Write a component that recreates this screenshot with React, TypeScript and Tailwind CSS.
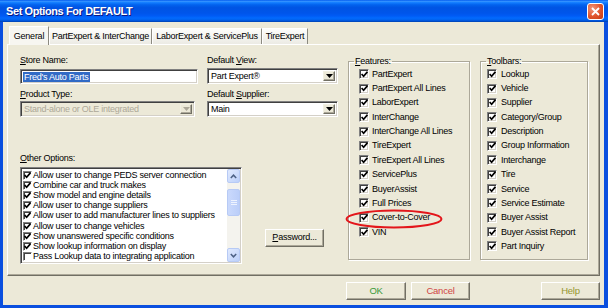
import React from "react";

const CheckMark = () => (
  <svg width="7" height="7" viewBox="0 0 7 7" className="block">
    <path d="M0.6 3 L2.6 5.2 L6.4 0.8" stroke="#000" strokeWidth="1.7" fill="none" />
  </svg>
);

const Box = ({ checked = true, small = false }: { checked?: boolean; small?: boolean }) => (
  <span
    className={
      small
        ? "inline-flex shrink-0 items-center justify-center w-[9px] h-[9px] bg-white border border-t-[#808080] border-l-[#808080] border-r-white border-b-white shadow-[inset_1px_1px_0_#404040]"
        : "inline-flex shrink-0 items-center justify-center w-[10px] h-[10px] bg-white border border-t-[#808080] border-l-[#808080] border-r-white border-b-white shadow-[inset_1px_1px_0_#404040,inset_-1px_-1px_0_#D4D0C8]"
    }
  >
    {checked && <CheckMark />}
  </span>
);

const DownArrow = ({ gray = false }: { gray?: boolean }) => (
  <svg width="7" height="4" viewBox="0 0 7 4" className="block">
    <polygon points="0,0 7,0 3.5,4" fill={gray ? "#ACA899" : "#000"} />
  </svg>
);

const Combo = ({ text, disabled = false, w }: { text: string; disabled?: boolean; w: string }) => (
  <div
    className={
      "flex items-center h-[16px] p-[2px] border border-t-[#808080] border-l-[#808080] border-r-white border-b-white shadow-[inset_1px_1px_0_#404040,inset_-1px_-1px_0_#D4D0C8] " +
      w +
      (disabled ? " bg-[#ECE9D8]" : " bg-white")
    }
  >
    <span className={"flex-1 pl-[1px] leading-[10px] whitespace-nowrap " + (disabled ? "text-[#ACA899]" : "text-black")}>
      {text}
    </span>
    <span className="flex items-center justify-center w-[12px] h-[10px] bg-[#ECE9D8] border border-t-[#F1EFE2] border-l-[#F1EFE2] border-r-[#716F64] border-b-[#716F64] shadow-[inset_-1px_-1px_0_#ACA899]">
      <DownArrow gray={disabled} />
    </span>
  </div>
);

const Label = ({ u, rest, cls = "" }: { u: string; rest: string; cls?: string }) => (
  <div className={"h-[11px] leading-[11px] whitespace-nowrap " + cls}>
    <span className="underline">{u}</span>
    {rest}
  </div>
);

const features = [
  "PartExpert",
  "PartExpert All Lines",
  "LaborExpert",
  "InterChange",
  "InterChange All Lines",
  "TireExpert",
  "TireExpert All Lines",
  "ServicePlus",
  "BuyerAssist",
  "Full Prices",
  "Cover-to-Cover",
  "VIN",
];

const toolbars = [
  "Lookup",
  "Vehicle",
  "Supplier",
  "Category/Group",
  "Description",
  "Group Information",
  "Interchange",
  "Tire",
  "Service",
  "Service Estimate",
  "Buyer Assist",
  "Buyer Assist Report",
  "Part Inquiry",
];

const options: [string, boolean][] = [
  ["Allow user to change PEDS server connection", true],
  ["Combine car and truck makes", true],
  ["Show model and engine details", true],
  ["Allow user to change suppliers", true],
  ["Allow user to add manufacturer lines to suppliers", true],
  ["Allow user to change vehicles", true],
  ["Show unanswered specific conditions", true],
  ["Show lookup information on display", true],
  ["Pass Lookup data to integrating application", false],
];

const tabs = [
  { label: "General", cls: "w-[40px] h-[19px] -mb-[1px] bg-[#F7F6F1]" },
  { label: "PartExpert & InterChange", cls: "w-[103px] h-[16px] bg-[linear-gradient(#FDFDFB,#ECEBE4)]" },
  { label: "LaborExpert & ServicePlus", cls: "w-[110px] h-[16px] bg-[linear-gradient(#FDFDFB,#ECEBE4)]" },
  { label: "TireExpert", cls: "w-[46px] h-[16px] bg-[linear-gradient(#FDFDFB,#ECEBE4)]" },
];

const Raised = "bg-[#ECE9D8] border border-t-white border-l-white border-r-[#716F64] border-b-[#716F64] shadow-[inset_-1px_-1px_0_#ACA899]";

const ScrollBtn = ({ up }: { up?: boolean }) => (
  <div className="h-[14px] w-[13px] flex items-center justify-center rounded-[2px] border border-[#B7CAF5] bg-[linear-gradient(135deg,#E1EAFE,#BCD0FA)]">
    <svg width="7" height="5" viewBox="0 0 7 5" className="block">
      <path d={up ? "M0.8 4 L3.5 1.2 L6.2 4" : "M0.8 1 L3.5 3.8 L6.2 1"} stroke="#4D6185" strokeWidth="1.5" fill="none" />
    </svg>
  </div>
);

export default function App() {
  return (
    <div className="relative w-[608px] h-[308px] overflow-hidden flex flex-col bg-[#0A4FDF] text-[9px] tracking-[-0.25px] text-black font-['Liberation_Sans',Arial,sans-serif]">
      {/* Title bar */}
      <div className="h-[22px] shrink-0 flex items-center pl-[6px] pr-[4px] bg-[linear-gradient(180deg,#0058EE_0%,#3593FF_6%,#127DFF_12%,#0262EE_22%,#0054E3_35%,#0055EB_60%,#005BF5_72%,#026AFE_82%,#0062EF_90%,#0052D6_95%,#0040AB_100%)]">
        <span className="text-white font-bold text-[11px] tracking-[-0.4px] leading-none [text-shadow:1px_1px_0_#0A1883]">
          Set Options For DEFAULT
        </span>
        <div className="ml-auto w-[17px] h-[17px] rounded-[3px] border border-white flex items-center justify-center bg-[radial-gradient(circle_at_30%_30%,#F0957A,#E0542C_55%,#C23B14)]">
          <svg width="9" height="9" viewBox="0 0 9 9" className="block">
            <path d="M1 1 L8 8 M8 1 L1 8" stroke="#fff" strokeWidth="1.8" />
          </svg>
        </div>
      </div>

      {/* Body */}
      <div className="flex-1 flex flex-col ml-[3px] mr-[4px] mb-[3px] bg-[#ECE9D8] px-[4px] pt-[4px]">
        {/* Tabs */}
        <div className="h-[18px] flex items-end pl-[2px] relative z-10">
          {tabs.map((t) => (
            <div
              key={t.label}
              className={
                "flex items-center justify-center whitespace-nowrap border-t border-l border-white border-r border-r-[#8C8A80] leading-none " +
                t.cls
              }
            >
              {t.label}
            </div>
          ))}
        </div>

        {/* Panel */}
        <div className="h-[232px] flex border border-t-white border-l-white border-r-[#716F64] border-b-[#716F64] shadow-[inset_-1px_-1px_0_#ACA899] pl-[12px] pt-[10px]">
          {/* Left section */}
          <div className="w-[317px] flex flex-col">
            <div className="flex gap-[9px]">
              <div className="w-[178px] flex flex-col">
                <Label u="S" rest="tore Name:" />
                <div className="mt-[3px] h-[15px] w-[178px] flex items-center bg-white pl-[2px] border border-t-[#808080] border-l-[#808080] border-r-white border-b-white shadow-[inset_1px_1px_0_#404040,inset_-1px_-1px_0_#D4D0C8]">
                  <span className="bg-[#316AC5] text-white leading-[10px] px-[1px] whitespace-nowrap">Fred's Auto Parts</span>
                </div>
                <Label u="P" rest="roduct Type:" cls="mt-[5px]" />
                <div className="mt-[1px]">
                  <Combo text="Stand-alone or OLE integrated" disabled w="w-[175px]" />
                </div>
              </div>
              <div className="w-[131px] flex flex-col">
                <div className="h-[11px] leading-[11px] whitespace-nowrap">
                  Default <span className="underline">V</span>iew:
                </div>
                <div className="mt-[2px]">
                  <Combo text="Part Expert®" w="w-[131px]" />
                </div>
                <div className="mt-[5px] h-[11px] leading-[11px] whitespace-nowrap">
                  Default <span className="underline">S</span>upplier:
                </div>
                <div className="mt-[1px]">
                  <Combo text="Main" w="w-[131px]" />
                </div>
              </div>
            </div>

            <Label u="O" rest="ther Options:" cls="mt-[36px]" />
            <div className="mt-[3px] flex items-end">
              <div className="w-[222px] h-[97px] flex bg-white border border-t-[#808080] border-l-[#808080] border-r-white border-b-white shadow-[inset_1px_1px_0_#404040,inset_-1px_-1px_0_#D4D0C8] p-[1px]">
                <div className="flex-1 flex flex-col pl-[1px] pt-[1px]">
                  {options.map(([t, c]) => (
                    <div key={t} className="h-[10.3px] flex items-center gap-[1px] whitespace-nowrap leading-none">
                      <Box small checked={c} />
                      <span>{t}</span>
                    </div>
                  ))}
                </div>
                <div className="w-[13px] flex flex-col bg-[#F4F3EE]">
                  <ScrollBtn up />
                  <div className="flex-1 pt-[6px]">
                    <div className="h-[27px] w-[13px] rounded-[2px] border border-[#B7CAF5] bg-[linear-gradient(90deg,#CAD9FC,#BBCEF9)] flex flex-col items-center justify-center gap-[1px]">
                      <div className="w-[6px] h-[1px] bg-[#EEF3FE]" />
                      <div className="w-[6px] h-[1px] bg-[#EEF3FE]" />
                      <div className="w-[6px] h-[1px] bg-[#EEF3FE]" />
                    </div>
                  </div>
                  <ScrollBtn />
                </div>
              </div>
              <div className={"ml-[23px] mb-[17px] w-[59px] h-[18px] flex items-center justify-center " + Raised}>
                <span className="underline">P</span>assword...
              </div>
            </div>
          </div>

          {/* Features */}
          <fieldset className="ml-[11px] mt-[1px] w-[122px] h-[204px] border border-[#ACA899] shadow-[inset_1px_1px_0_#fff,1px_1px_0_#fff] p-0 m-0">
            <legend className="ml-[5px] px-[1px] leading-[10px]">
              <span className="underline">F</span>eatures:
            </legend>
            <div className="flex flex-col pt-[1px] pl-[10px]">
              {features.map((f) => (
                <div key={f} className="h-[14.36px] flex items-center gap-[3px] whitespace-nowrap leading-none">
                  <Box />
                  <span>{f}</span>
                </div>
              ))}
            </div>
          </fieldset>

          {/* Toolbars */}
          <fieldset className="ml-[10px] mt-[1px] w-[108px] h-[204px] border border-[#ACA899] shadow-[inset_1px_1px_0_#fff,1px_1px_0_#fff] p-0 m-0">
            <legend className="ml-[5px] px-[1px] leading-[10px]">
              <span className="underline">T</span>oolbars:
            </legend>
            <div className="flex flex-col pt-[1px] pl-[6px]">
              {toolbars.map((f) => (
                <div key={f} className="h-[14.36px] flex items-center gap-[4px] whitespace-nowrap leading-none">
                  <Box />
                  <span>{f}</span>
                </div>
              ))}
            </div>
          </fieldset>
        </div>

        {/* Buttons */}
        <div className="mt-[6px] flex justify-end">
          <div className={"w-[60px] h-[18px] flex items-center justify-center text-[9.5px] text-[#3A9A3A] " + Raised}>OK</div>
          <div className={"ml-[5px] w-[59px] h-[18px] flex items-center justify-center text-[9.5px] text-[#D04545] " + Raised}>Cancel</div>
          <div className={"ml-[71px] w-[59px] h-[18px] flex items-center justify-center text-[9.5px] text-[#96962E] " + Raised}>Help</div>
        </div>
      </div>

      {/* Annotation ellipse */}
      <svg className="absolute left-[345px] top-[209px]" width="98" height="20" viewBox="0 0 98 20">
        <ellipse cx="49" cy="10" rx="47.5" ry="8.5" stroke="#E3161B" strokeWidth="2" fill="none" />
      </svg>
    </div>
  );
}
